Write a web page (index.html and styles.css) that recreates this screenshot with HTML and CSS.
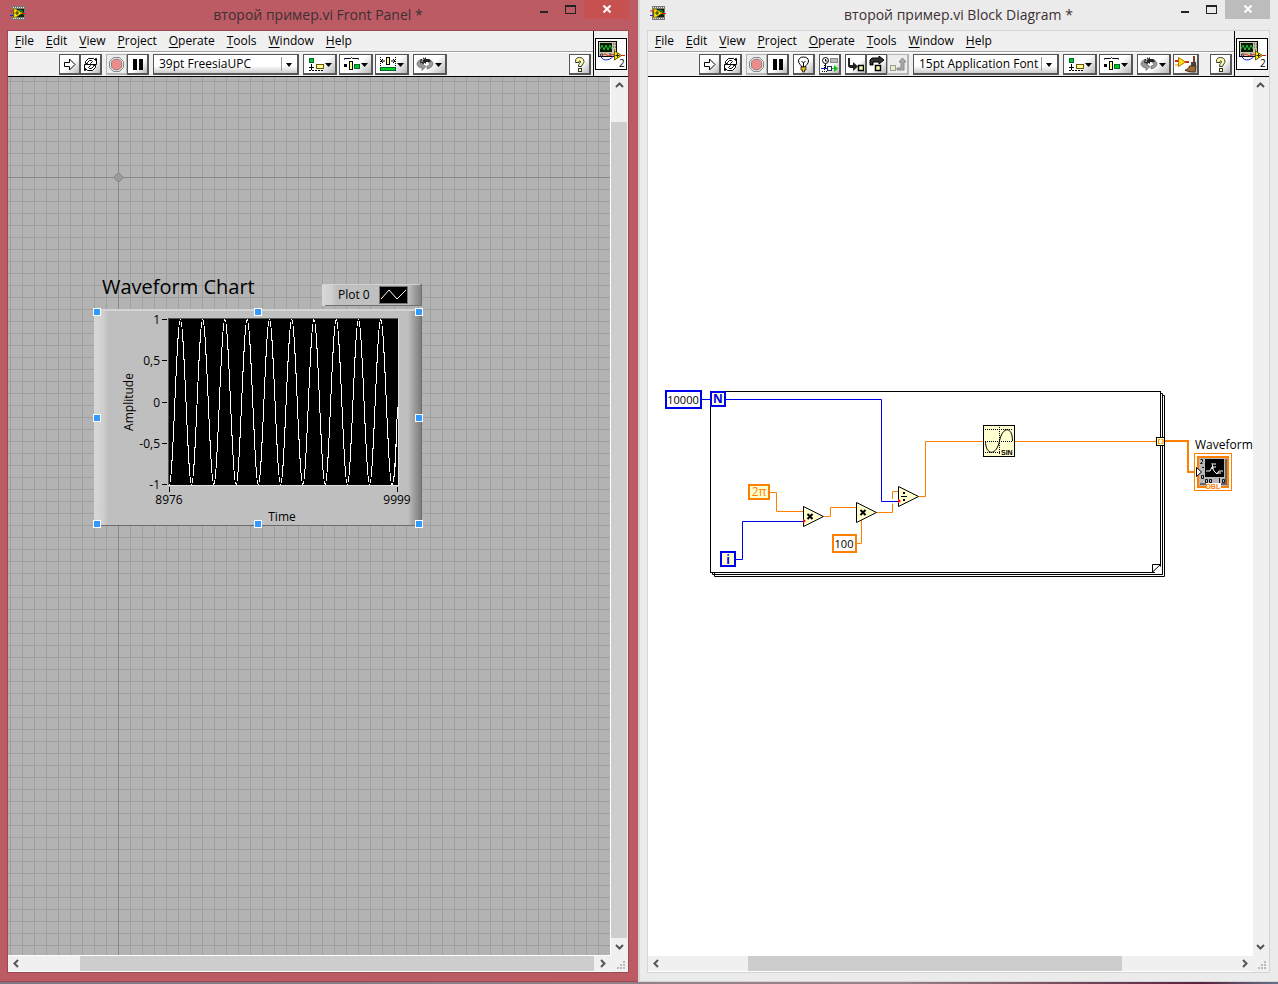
FILE: index.html
```html
<!DOCTYPE html>
<html lang="ru">
<head>
<meta charset="utf-8">
<title>второй пример.vi</title>
<link rel="stylesheet" href="styles.css">
</head>
<body>
<svg class="sprite" aria-hidden="true">
  <symbol id="vi" viewBox="0 0 16 15">
    <rect x="2" y="0" width="13" height="14" fill="#777a72"/>
    <path d="M3 1.5h12M3 12.5h12" stroke="#e4e4e4" stroke-dasharray="1 1"/>
    <rect x="3" y="3" width="11" height="8" fill="#10230c"/>
    <path d="M9 4l3 1 2 4" stroke="#28a02c" fill="none"/>
    <path d="M0 5h5M11 7.500h5" stroke="#e01818"/><path d="M0 9.500h5" stroke="#1822d8"/>
    <path d="M4 2.500v9.500l8-5z" fill="#ffee00" stroke="#b59c00"/>
    <path d="M5 7h4M7 5v4" stroke="#222"/>
  </symbol>
  <symbol id="run" viewBox="0 0 17 17"><path d="M3.500 6.500h5v-3.500l5.500 5.500-5.500 5.500v-3.500h-5z" fill="#fff" stroke="#000"/></symbol>
  <symbol id="loop" viewBox="0 0 17 17">
    <path d="M3.500 7.500v-2l3-3h5l2 2v-2h1v6h-6v-1l2-2-1-1h-2l-2 2v1z" fill="#fff" stroke="#000"/>
    <path d="M13.500 9.500v2l-3 3h-5l-2-2v2h-1v-6h6v1l-2 2 1 1h2l2-2v-1z" fill="#fff" stroke="#000"/>
  </symbol>
  <symbol id="stop" viewBox="0 0 17 17">
    <path d="M5.500 1.500h6l4 4v6l-4 4h-6l-4-4v-6z" fill="#ddd" stroke="#888"/>
    <path d="M6 3.500h5l2.500 2.500v5l-2.500 2.500h-5l-2.500-2.500v-5z" fill="#ec8c8c" stroke="#a08080"/>
  </symbol>
  <symbol id="pause" viewBox="0 0 17 17"><path d="M4 3h4v11h-4zM10 3h4v11h-4z"/></symbol>
  <symbol id="bulb" viewBox="0 0 17 17">
    <path d="M6.500 11c0-2-3-3-3-6 0-2.500 2-4 5-4s5 1.500 5 4c0 3-3 4-3 6z" fill="#fff" stroke="#000"/>
    <path d="M6.500 5l2 2 2-2M8.500 7v4" stroke="#000" fill="none"/>
    <path d="M6 11h5v3h-1.500v2h-2v-2h-1.500z" fill="#f3bd13" stroke="#000" stroke-width=".7"/>
  </symbol>
  <symbol id="retain" viewBox="0 0 17 17">
    <circle cx="4.500" cy="4.500" r="3" fill="#fff" stroke="#000"/><path d="M4.500 3v2h2M4.500 7.500v5" stroke="#000" fill="none"/>
    <rect x="9.500" y="2.500" width="7" height="4" fill="#bbb" stroke="#888"/>
    <path d="M0 12.500h7" stroke="#1122c0"/>
    <path d="M10 12.500h4" stroke="#16b82c"/><path d="M13 9l4 3.500-4 3.500z" fill="#10c020"/>
    <rect x="6.500" y="10.500" width="4" height="4" fill="#fff" stroke="#1a2a4a"/>
    <path d="M1 15.500h5M3.500 9v6" stroke="#000" stroke-dasharray="1 1"/>
  </symbol>
  <symbol id="into" viewBox="0 0 17 17">
    <path d="M1 2h2v7h3v-3l5 4.500-5 4.500v-3h-3l-2-1.500z" fill="#222"/>
    <rect x="11.500" y="9.500" width="5" height="5" fill="#ffffb0" stroke="#000" stroke-width="1.500"/>
  </symbol>
  <symbol id="over" viewBox="0 0 17 17">
    <path d="M2 9v-5l2-2h7v-2l5 4-5 4v-2h-6v3z" fill="#333" stroke="#000"/>
    <rect x="7.500" y="9.500" width="5" height="5" fill="#ffffb0" stroke="#000" stroke-width="1.500"/>
  </symbol>
  <symbol id="out" viewBox="0 0 17 17">
    <rect x="1.500" y="9.500" width="5" height="5" fill="#eeeec8" stroke="#999"/>
    <path d="M8 14v-2h4v-6h-2l3.500-4 3.500 4h-2v8z" fill="#aaa" stroke="#888"/>
  </symbol>
  <symbol id="align" viewBox="0 0 28 17">
    <rect x="3.500" y="2.500" width="4" height="4" fill="#00c820" stroke="#063"/>
    <path d="M3 11.500h5M5.500 8v6" stroke="#000"/><path d="M3 14.500h15" stroke="#000" stroke-dasharray="2 1"/>
    <rect x="10.500" y="8.500" width="7" height="4" fill="#ffff90" stroke="#665500"/>
    <path d="M19 7h7l-3.500 4z"/>
  </symbol>
  <symbol id="spread" viewBox="0 0 28 17">
    <path d="M2.500 3.500v-1h6l1-1 1 1h6v1" stroke="#000" fill="none"/>
    <path d="M2 8h3v3h-3z"/><rect x="7.500" y="5.500" width="3" height="8" fill="#ffff90" stroke="#000"/>
    <rect x="12.500" y="8.500" width="5" height="4" fill="#00c820" stroke="#063"/>
    <path d="M19 7h7l-3.500 4z"/>
  </symbol>
  <symbol id="size" viewBox="0 0 28 17">
    <path d="M2.500 1v9M17.500 1v9" stroke="#000" stroke-dasharray="1 1"/>
    <path d="M3 5h4M13 5h4M3 5l2-2M3 5l2 2M17 5l-2-2M17 5l-2 2" stroke="#000"/>
    <rect x="8.500" y="1.500" width="3" height="7" fill="#ffff90" stroke="#000"/>
    <rect x="2.500" y="11.500" width="15" height="3" fill="#00d020" stroke="#063"/>
    <path d="M19 7h7l-3.500 4z"/>
  </symbol>
  <symbol id="order" viewBox="0 0 28 17">
    <path d="M5 3.500c-6 2-5 8 1 8.500v2.500l4-4-4-3v1.500c-2-.5-2.500-2.500 0-3z" fill="#999" stroke="#666" stroke-width=".7"/>
    <path d="M13 3.500c6 2 5 8-2 9.500v-3c3-.5 3.500-3 1-3.500z" fill="#999" stroke="#666" stroke-width=".7"/>
    <path d="M8 1v2h-3l-1 3h4v2l-4-1M10 1l-4 4 4 3v-2h4l1-1-2-2h-3z" fill="#222"/>
    <path d="M19 7h7l-3.500 4z"/>
  </symbol>
  <symbol id="clean" viewBox="0 0 22 17">
    <path d="M0 5h4M10 6h4" stroke="#e02020" stroke-width="2"/><path d="M0 9h4" stroke="#e88600"/>
    <path d="M3.500 1.500v9l7-4.500z" fill="#ffdf10" stroke="#a87900"/>
    <path d="M18 0h2v7h-2z" fill="#7a3c1a"/><path d="M16 6h5v4h-5z" fill="#444"/>
    <path d="M14.500 10h6.500l-1 6c-3 0-7 0-10-2 2 0 4-2 4.500-4z" fill="#9a6a38" stroke="#4b2d12"/>
  </symbol>
  <symbol id="help" viewBox="0 0 17 17">
    <path d="M4.500 5.500c0-3 1.500-4 4-4s4.500 1.500 4.500 4c0 2-2 2.500-2.500 5h-3c0-3 2-3.500 2-5 0-1-1.500-1-1.500.5v.5h-3.500z" fill="#ffffa0" stroke="#333"/>
    <rect x="7.500" y="12.500" width="3" height="3" fill="#ffffa0" stroke="#333"/>
  </symbol>
  <symbol id="badge" viewBox="0 0 30 30">
    <rect x="2.500" y="2.500" width="18" height="15" fill="#c9c5a8" stroke="#000"/>
    <rect x="4" y="4" width="12" height="9" fill="#041c06"/>
    <path d="M4 10l2-4 2 5 2-5 2 5 2-5 2 4" fill="none" stroke="#28c838"/>
    <path d="M17 5h1M19 5h1M17 8h1M19 8h1M18 11h1M5 15h2M13 15h2" stroke="#333"/>
    <path d="M4.500 15c0 7 8 8 13 2" fill="none" stroke="#1524c8"/>
    <path d="M6 17c4-5 5 2 9-1 2-1 3 0 5 0M25 16.500h4" fill="none" stroke="#e01818"/>
    <path d="M18.500 12v9l7-4.500z" fill="#ffe600" stroke="#6d5c00"/><path d="M19.500 16.500h4M21.500 14.500v4" stroke="#222"/>
  </symbol>
  <symbol id="left" viewBox="0 0 9 9"><path d="M6 1L2.500 4.500 6 8" fill="none" stroke="#555" stroke-width="2"/></symbol>
  <symbol id="right" viewBox="0 0 9 9"><path d="M3 1l3.500 3.500L3 8" fill="none" stroke="#555" stroke-width="2"/></symbol>
  <symbol id="up" viewBox="0 0 9 9"><path d="M1 6l3.500-3.500L8 6" fill="none" stroke="#555" stroke-width="2"/></symbol>
  <symbol id="down" viewBox="0 0 9 9"><path d="M1 3l3.500 3.500L8 3" fill="none" stroke="#555" stroke-width="2"/></symbol>
  <symbol id="grip" viewBox="0 0 9 9"><path d="M6 0h2v2h-2zM3 3h2v2h-2zM6 3h2v2h-2zM0 6h2v2h-2zM3 6h2v2h-2zM6 6h2v2h-2z" fill="#bbb"/></symbol>
</svg>

<main class="desktop">
  <section class="window window-active" aria-label="Front Panel">
    <header class="titlebar">
      <svg class="app-icon"><use href="#vi"/></svg>
      <h1 class="title">второй пример.vi Front Panel *</h1>
      <div class="controls">
        <button class="control" aria-label="Minimize"><span class="glyph-min"></span></button>
        <button class="control" aria-label="Maximize"><span class="glyph-max"></span></button>
        <button class="control control-close" aria-label="Close"><svg class="glyph-close" viewBox="0 0 8 8"><path d="M.5.5l7 7M7.500.5l-7 7"/></svg></button>
      </div>
    </header>
    <div class="client">
      <div class="head">
        <nav class="menu">
          <button><u>F</u>ile</button><button><u>E</u>dit</button><button><u>V</u>iew</button><button><u>P</u>roject</button><button><u>O</u>perate</button><button><u>T</u>ools</button><button><u>W</u>indow</button><button><u>H</u>elp</button>
        </nav>
        <div class="toolbar">
          <div class="group"><button class="tool" aria-label="Run"><svg><use href="#run"/></svg></button><button class="tool" aria-label="Run continuously"><svg><use href="#loop"/></svg></button></div>
          <div class="group"><button class="tool tool-off" aria-label="Abort"><svg><use href="#stop"/></svg></button><button class="tool" aria-label="Pause"><svg><use href="#pause"/></svg></button></div>
          <label class="combo"><select aria-label="Font"><option>39pt FreesiaUPC</option></select></label>
          <div class="group group-wide"><button class="tool wide" aria-label="Align"><svg><use href="#align"/></svg></button><button class="tool wide" aria-label="Distribute"><svg><use href="#spread"/></svg></button><button class="tool wide" aria-label="Resize"><svg><use href="#size"/></svg></button></div>
          <button class="tool wide" aria-label="Reorder"><svg><use href="#order"/></svg></button>
          <button class="tool tool-help" aria-label="Context help"><svg><use href="#help"/></svg></button>
        </div>
        <div class="vi-box"><svg class="vi-icon" viewBox="0 0 30 30"><use href="#badge"/><text x="23" y="28" class="badge-no">2</text></svg></div>
      </div>
      <div class="work">
        <div class="canvas panel-canvas">
          <span class="axis axis-x"></span><span class="axis axis-y"></span>
          <svg class="origin" viewBox="0 0 11 11"><path d="M5.500.5l5 5-5 5-5-5z" fill="#9a9a9a" stroke="#858585"/></svg>
          <svg class="chart" viewBox="85 265 350 270" role="img" aria-label="Waveform Chart">
            <defs>
              <linearGradient id="bl"><stop offset="0" stop-color="#d8d8d8"/><stop offset=".7" stop-color="#cecece"/><stop offset="1" stop-color="#bfbfbf"/></linearGradient>
              <linearGradient id="br"><stop offset="0" stop-color="#bfbfbf"/><stop offset=".35" stop-color="#a6a6a6"/><stop offset="1" stop-color="#7c7c7c"/></linearGradient>
              <clipPath id="plot"><rect x="169" y="319" width="229" height="166"/></clipPath>
            </defs>
            <text x="102" y="294" class="chart-title">Waveform Chart</text>
            <rect x="322" y="284" width="100" height="22" fill="#bfbfbf"/>
            <rect x="322" y="284" width="14" height="22" fill="url(#bl)"/><rect x="408" y="284" width="14" height="22" fill="url(#br)"/>
            <path d="M322 284.500h98" stroke="#d2d2d2"/><path d="M325 305.500h97M421.500 285v20" stroke="#707070"/>
            <text x="338" y="299">Plot 0</text>
            <rect x="379.500" y="286.500" width="28" height="17" fill="#000" stroke="#777"/>
            <path d="M381 299l8-9 8 9 9-9" stroke="#fff" fill="none"/>
            <rect x="94" y="309" width="328" height="217" fill="#bfbfbf"/>
            <rect x="94" y="309" width="14" height="217" fill="url(#bl)"/><rect x="408" y="311" width="13" height="214" fill="url(#br)"/>
            <path d="M94 310h326" stroke="#d4d4d4" stroke-width="2"/><path d="M95 525.500h327M421.500 310v216" stroke="#6c6c6c"/>
            <rect x="168" y="318" width="230" height="167" fill="#000"/>
            <path d="M168.500 486v-167.500h230" fill="none" stroke="#555"/><path d="M168 485.500h230.500v-167" fill="none" stroke="#dedede"/>
            <path class="wave" clip-path="url(#plot)" d="M169.300 484.500c4 0 7.130-165 11.130-165s7.130 165 11.130 165 7.130-165 11.130-165 7.130 165 11.130 165 7.130-165 11.130-165 7.130 165 11.130 165 7.130-165 11.130-165 7.130 165 11.130 165 7.130-165 11.130-165 7.130 165 11.130 165 7.130-165 11.130-165 7.130 165 11.130 165 7.130-165 11.130-165 7.130 165 11.130 165 7.130-165 11.130-165 7.130 165 11.130 165 7.130-165 11.130-165 7.130 165 11.130 165 7.130-165 11.130-165 7.130 165 11.130 165c3 0 4-30 5.500-77"/>
            <path d="M162 319.500h5M162 360.500h5M162 402.500h5M162 443.500h5M162 484.500h5M169.500 487v5M397.500 487v5" stroke="#000"/>
            <g text-anchor="end"><text x="160" y="324">1</text><text x="160" y="365">0,5</text><text x="160" y="407">0</text><text x="160" y="448">-0,5</text><text x="160" y="489">-1</text></g>
            <g text-anchor="middle"><text x="169" y="504">8976</text><text x="397" y="504">9999</text><text x="282" y="521">Time</text><text transform="translate(133 402) rotate(-90)">Amplitude</text></g>
            <g class="handles">
              <rect x="93.500" y="308.500" width="7" height="7"/><rect x="254.500" y="308.500" width="7" height="7"/><rect x="415.500" y="308.500" width="7" height="7"/>
              <rect x="93.500" y="414.500" width="7" height="7"/><rect x="415.500" y="414.500" width="7" height="7"/>
              <rect x="93.500" y="520.500" width="7" height="7"/><rect x="254.500" y="520.500" width="7" height="7"/><rect x="415.500" y="520.500" width="7" height="7"/>
            </g>
          </svg>
        </div>
        <div class="vbar"><button class="arrow" aria-label="Scroll up"><svg><use href="#up"/></svg></button><div class="track"><span class="thumb" style="top:3.300%;height:96.700%"></span></div><button class="arrow" aria-label="Scroll down"><svg><use href="#down"/></svg></button></div>
        <div class="hbar"><button class="arrow" aria-label="Scroll left"><svg><use href="#left"/></svg></button><div class="track"><span class="thumb" style="left:9.700%;width:90.300%"></span></div><button class="arrow" aria-label="Scroll right"><svg><use href="#right"/></svg></button></div>
        <div class="corner"><svg><use href="#grip"/></svg></div>
      </div>
    </div>
  </section>

  <section class="window window-idle" aria-label="Block Diagram">
    <header class="titlebar">
      <svg class="app-icon"><use href="#vi"/></svg>
      <h1 class="title">второй пример.vi Block Diagram *</h1>
      <div class="controls">
        <button class="control" aria-label="Minimize"><span class="glyph-min"></span></button>
        <button class="control" aria-label="Maximize"><span class="glyph-max"></span></button>
        <button class="control control-close" aria-label="Close"><svg class="glyph-close" viewBox="0 0 8 8"><path d="M.5.5l7 7M7.500.5l-7 7"/></svg></button>
      </div>
    </header>
    <div class="client">
      <div class="head">
        <nav class="menu">
          <button><u>F</u>ile</button><button><u>E</u>dit</button><button><u>V</u>iew</button><button><u>P</u>roject</button><button><u>O</u>perate</button><button><u>T</u>ools</button><button><u>W</u>indow</button><button><u>H</u>elp</button>
        </nav>
        <div class="toolbar">
          <div class="group"><button class="tool" aria-label="Run"><svg><use href="#run"/></svg></button><button class="tool" aria-label="Run continuously"><svg><use href="#loop"/></svg></button></div>
          <div class="group"><button class="tool tool-off" aria-label="Abort"><svg><use href="#stop"/></svg></button><button class="tool" aria-label="Pause"><svg><use href="#pause"/></svg></button></div>
          <button class="tool" aria-label="Highlight execution"><svg><use href="#bulb"/></svg></button>
          <button class="tool" aria-label="Retain wire values"><svg><use href="#retain"/></svg></button>
          <div class="group"><button class="tool" aria-label="Step into"><svg><use href="#into"/></svg></button><button class="tool" aria-label="Step over"><svg><use href="#over"/></svg></button><button class="tool tool-off" aria-label="Step out"><svg><use href="#out"/></svg></button></div>
          <label class="combo"><select aria-label="Font"><option>15pt Application Font</option></select></label>
          <div class="group group-wide"><button class="tool wide" aria-label="Align"><svg><use href="#align"/></svg></button><button class="tool wide" aria-label="Distribute"><svg><use href="#spread"/></svg></button></div>
          <div class="group group-wide"><button class="tool wide" aria-label="Reorder"><svg><use href="#order"/></svg></button><button class="tool mid" aria-label="Clean up diagram"><svg><use href="#clean"/></svg></button></div>
          <button class="tool tool-help" aria-label="Context help"><svg><use href="#help"/></svg></button>
        </div>
        <div class="vi-box"><svg class="vi-icon" viewBox="0 0 30 30"><use href="#badge"/><text x="23" y="28" class="badge-no">2</text></svg></div>
      </div>
      <div class="work">
        <div class="canvas">
          <svg class="diagram" viewBox="648 377 605 220" role="img" aria-label="Block diagram">
            <g fill="#fff" stroke="#000">
              <path d="M714.500 573v3.500h450v-181h-2M712.500 573v1.500h450v-181h-2"/><rect x="710.500" y="391.500" width="450" height="181"/>
              <path d="M1152.500 572v-7.500h8z"/><path d="M1154 573.500h7.500v-8z" stroke="none"/>
            </g>
            <g fill="none" stroke="#0000f0"><path d="M702 399.500h9M726 399.500h155.500v102h17M736 559.500h6.500v-38h61"/></g>
            <g fill="none" stroke="#ff8000">
              <path d="M770 492.500h6.500v19h27M824 516.500h6.500v-9h26M857 543.500h4.500v-24M877 512.500h15.500v-9M892.500 499v-7.500h6M919 496.500h6.500v-55h231"/>
              <path d="M1165 441h23v31h7" stroke-width="2"/>
            </g>
            <g stroke="#0000f0" stroke-width="2">
              <rect x="666" y="391" width="35" height="17" fill="#fff"/><rect x="711" y="392" width="14" height="14" fill="#ffffd0"/><rect x="721" y="552" width="14" height="14" fill="#ffffd0"/>
            </g>
            <g stroke="#ff8000" stroke-width="2"><rect x="749" y="485" width="20" height="14" fill="#ffffd0"/><rect x="833" y="535" width="23" height="17" fill="#fff"/></g>
            <g text-anchor="middle"><text x="683" y="404" class="value">10000</text><text x="844" y="548" class="value">100</text><text x="759" y="496" class="pi">2π</text><text x="718" y="403" class="term">N</text><text x="728" y="564" class="term">i</text></g>
            <g fill="#ffffd0" stroke="#000">
              <path d="M803.500 506.500v20l20-10zM856.500 502.500v20l20-10zM898.500 486.500v20l20-10z"/>
              <path d="M807.500 514l5 5M812.500 514l-5 5M860.500 510l5 5M865.500 510l-5 5" stroke-width="2"/>
              <path d="M901 496.500h6"/><path d="M903 493h2M903 500h2" stroke-width="2"/>
            </g>
            <path d="M803 518.500l3 2.500-3 2.500zM898 498.500l3 2.500-3 2.500z" fill="#f00"/>
            <rect x="983.500" y="425.500" width="31" height="31" fill="#ffffd0" stroke="#000"/>
            <path d="M985 429.500h28M985 441.500h28M985 452.500h15M999.500 427v28" stroke="#000" stroke-dasharray="1 1"/>
            <path d="M985.500 441c0 15 11 15 14 0s13-15 13 0" fill="none" stroke="#000"/>
            <text x="1001" y="455" class="micro">SIN</text>
            <rect x="1156.500" y="437.500" width="8" height="8" fill="#ffffd0" stroke="#000"/><path d="M1160 439.500h-1.500v4h1.500M1161.500 439.500h1.500v4h-1.500" fill="none" stroke="#ff8000"/>
            <text x="1195" y="449">Waveform</text>
            <rect x="1194.500" y="453.500" width="37" height="37" fill="#fff" stroke="#ff8000"/>
            <rect x="1198" y="457" width="30" height="30" fill="#b8b8b8" stroke="#ff8000" stroke-width="2"/>
            <path d="M1226 459v25h-26" fill="none" stroke="#666" stroke-width="2"/>
            <rect x="1205" y="459" width="19" height="18" fill="#000"/>
            <path d="M1206 471h4l2-4 2 4 3 3 2-3h4M1212 463l1 6M1213 464h3M1213 467h3M1217 473h4" fill="none" stroke="#fff"/>
            <path d="M1200.500 459.500h2v2l-2 2h2M1204 467.500h-2M1201.500 475.500h2v3h-2zM1205.500 479.500h2v3h-2zM1209.500 479.500h2v3h-2zM1219.500 478v5M1222.500 479.500h2v3h-2z" fill="none" stroke="#111"/>
            <path d="M1196.500 467.500v9l5-4.500z" fill="#fff" stroke="#000"/>
            <rect x="1206" y="483" width="15" height="7" fill="#fff"/><text x="1213" y="489" text-anchor="middle" class="micro dbl">DBL</text>
          </svg>
        </div>
        <div class="vbar"><button class="arrow" aria-label="Scroll up"><svg><use href="#up"/></svg></button><div class="track"></div><button class="arrow" aria-label="Scroll down"><svg><use href="#down"/></svg></button></div>
        <div class="hbar"><button class="arrow" aria-label="Scroll left"><svg><use href="#left"/></svg></button><div class="track"><span class="thumb" style="left:14.500%;width:65.500%"></span></div><button class="arrow" aria-label="Scroll right"><svg><use href="#right"/></svg></button></div>
        <div class="corner"><svg><use href="#grip"/></svg></div>
      </div>
    </div>
  </section>
</main>
</body>
</html>
```

FILE: styles.css
```css
* { box-sizing: border-box; }
body { margin: 0; background: linear-gradient(90deg, #7d7883, #99838c 70%, #58233c 94%, #66708a); font: 12px/16px "Open Sans", "Noto Sans", sans-serif; color: #000; }
button { font: inherit; color: inherit; padding: 0; border: 0; background: none; }
svg { display: block; }
.sprite { position: absolute; width: 0; height: 0; }

.desktop { display: grid; grid-template-columns: 1fr 1fr; gap: 2px; height: 100vh; padding-bottom: 2px; background: linear-gradient(#d6d6d6, #d6d6d6) top / 100% calc(100% - 2px) no-repeat; }
.window { display: flex; flex-direction: column; min-width: 0; padding: 0 9px 8px 7px; background: var(--frame); border-bottom: 1px solid var(--edge); }
.window-active { --frame: #bc5b64; --edge: #9c4851; --close: #c75050; }
.window-idle { --frame: #ebebeb; --edge: #d5d5d5; --close: #bcbcbc; padding-right: 8px; }

.titlebar { display: grid; grid-template-columns: 1fr auto 1fr; height: 30px; }
.app-icon { width: 16px; height: 15px; margin: 6px 0 0 3px; }
.title { margin: 4px 0 0; font-size: 14px; line-height: 22px; font-weight: 400; color: #3c3034; white-space: nowrap; }
.controls { display: flex; justify-content: flex-end; align-items: flex-start; }
.control { display: flex; justify-content: center; width: 27px; height: 19px; padding-top: 5px; }
.control-close { width: 45px; background: var(--close); }
.glyph-min { width: 8px; height: 2px; margin-top: 6px; background: #222; }
.glyph-max { width: 11px; height: 9px; border: 1px solid #222; border-top-width: 2px; }
.glyph-close { width: 8px; height: 8px; stroke: #fff; stroke-width: 2; }

.client { flex: 1; display: flex; flex-direction: column; min-height: 0; border: 1px solid var(--edge); background: #f0f0f0; }
.head { display: grid; grid-template-columns: 1fr auto; border-bottom: 1px solid #000; }
.menu { display: flex; gap: 12px; height: 21px; padding: 0 7px 2px; border-bottom: 1px solid #a0a0a0; }
.menu button { line-height: 17px; }
.menu u { text-underline-offset: 2px; }
.toolbar { display: flex; gap: 4px; height: 24px; padding: 1px 2px 2px 51px; border-top: 1px solid #fff; grid-column: 1; }
.vi-box { grid-column: 2; grid-row: 1 / 3; display: flex; align-items: center; padding: 0 1px; border-left: 1px solid #000; }
.vi-icon { width: 32px; height: 32px; background: #fff; border: 1px solid #000; }
.badge-no { font: 10px "Open Sans", sans-serif; }

.group { display: flex; }
.group .tool + .tool { margin-left: -1px; }
.group-wide { gap: 3px; }
.tool { width: 22px; height: 21px; border: 1px solid #555; border-right: 2px solid #555; border-bottom: 2px solid #555; background: linear-gradient(135deg, #fff 55%, #b8b8b8); }
.tool svg { width: 17px; height: 17px; margin: auto; }
.tool-off { border-color: #b4b4b4; background: #ededed; }
.wide { width: 34px; }
.wide svg { width: 28px; }
.mid { width: 26px; }
.mid svg { width: 22px; }
.tool-help { margin-left: auto; }
.combo { position: relative; width: 146px; height: 21px; }
.combo select { width: 100%; height: 100%; padding: 0 5px; appearance: none; border: 1px solid #555; border-right-width: 2px; border-bottom-width: 2px; border-radius: 0; background: linear-gradient(#fff 60%, #ccc); font: inherit; color: #000; }
.combo::before { content: ""; position: absolute; right: 17px; top: 3px; height: 14px; border-left: 1px solid #999; }
.combo::after { content: ""; position: absolute; right: 7px; top: 9px; border: 3px solid transparent; border-top: 4px solid #000; border-bottom: 0; }

.work { flex: 1; display: grid; grid-template: 1fr 17px / 1fr 17px; min-height: 0; }
.canvas { position: relative; overflow: hidden; background: #fff; }
.window-idle .work { grid-template-columns: 1fr 16px; }
.panel-canvas { border-right: 1px solid #fff; background: repeating-linear-gradient(90deg, transparent 0 2px, #9f9f9f 2px 3px, transparent 3px 12px), repeating-linear-gradient(transparent 0 4px, #9f9f9f 4px 5px, transparent 5px 12px), #b3b3b3; }
.axis { position: absolute; background: #888; }
.axis-x { left: 0; right: 0; top: 100px; height: 1px; }
.axis-y { top: 0; bottom: 0; left: 110px; width: 1px; }
.origin { position: absolute; left: 105px; top: 95px; width: 11px; height: 11px; }
.chart { position: absolute; left: 77px; top: 188px; width: 350px; height: 270px; }
.chart-title { font: 20px "Open Sans", sans-serif; }
.wave { fill: none; stroke: #fff; shape-rendering: crispEdges; }
.handles rect { fill: #3399ff; stroke: #fff; }
.diagram { position: absolute; left: 0; top: 300px; width: 605px; height: 220px; }
.value { font-size: 11px; }
.pi { fill: #ff8000; }
.term { font-weight: 700; fill: #0000f0; }
.micro { font: 700 7px "Liberation Sans", sans-serif; }
.dbl { fill: #ff8000; }

.vbar, .hbar { display: flex; background: #f0f0f0; }
.vbar { flex-direction: column; padding-right: 1px; }
.hbar { border-top: 1px solid #fff; border-bottom: 1px solid #fff; }
.track { position: relative; flex: 1; }
.thumb { position: absolute; background: #cdcdcd; }
.vbar .thumb { left: 0; right: 0; }
.hbar .thumb { top: 0; bottom: 0; }
.arrow { display: flex; align-items: center; justify-content: center; flex: 0 0 17px; }
.arrow svg { width: 9px; height: 9px; }
.corner { display: flex; align-items: flex-end; justify-content: flex-end; padding: 2px; background: #f0f0f0; }
.corner svg { width: 9px; height: 9px; }
```
